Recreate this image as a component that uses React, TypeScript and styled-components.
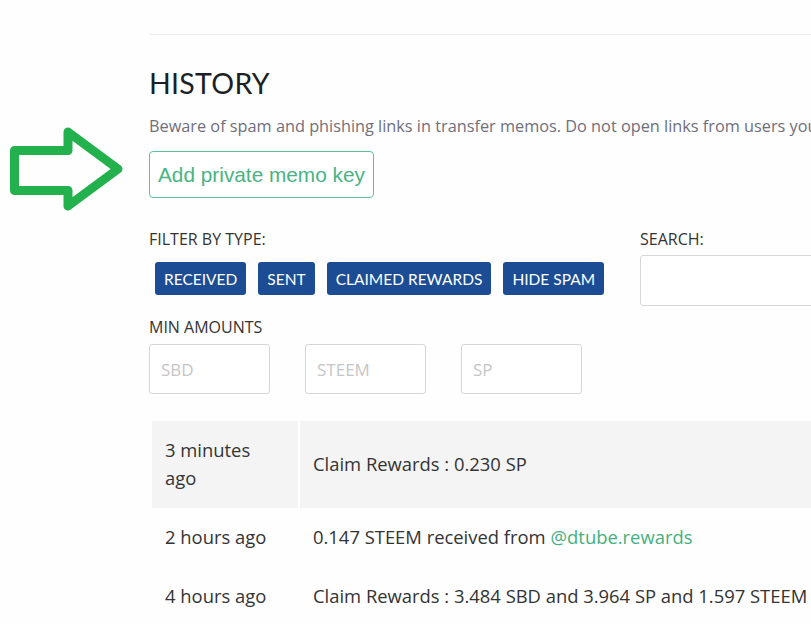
import React from 'react'
import styled, { createGlobalStyle } from 'styled-components'

const GlobalStyle = createGlobalStyle`
  html, body {
    margin: 0;
    padding: 0;
    background: #fefefe;
    overflow: hidden;
  }
  body {
    font-family: 'Open Sans', Lato, sans-serif;
    color: #333;
  }
`

const Page = styled.div`
  position: relative;
  width: 811px;
  height: 624px;
  overflow: hidden;
`

const Content = styled.div`
  width: 760px;
  padding-left: 149px;
  padding-top: 34px;
`

const Rule = styled.hr`
  margin: 0;
  border: 0;
  border-top: 1px solid #ececec;
`

const Title = styled.h2`
  margin: 32px 0 0;
  font-family: Lato, sans-serif;
  font-size: 28.5px;
  font-weight: 400;
  line-height: 32px;
  color: #1b1f26;
  letter-spacing: 0.3px;
`

const Notice = styled.p`
  margin: 18px 0 0;
  font-size: 16.3px;
  line-height: 18px;
  color: #6f6f7a;
  white-space: nowrap;
`

const MemoButton = styled.button`
  margin-top: 16px;
  height: 47px;
  padding: 0 8px;
  border: 1.5px solid #5cc29a;
  border-radius: 4px;
  background: #fff;
  color: #48b383;
  font-family: 'Liberation Sans', Arial, sans-serif;
  font-size: 20.8px;
`

const Filters = styled.div`
  display: grid;
  grid-template-columns: 491px 1fr;
  margin-top: 32px;
`

const Label = styled.div`
  font-size: 16px;
  line-height: 18px;
  color: #333;
  text-transform: uppercase;
`

const ButtonRow = styled.div`
  display: flex;
  gap: 12px;
  margin: 14px 0 0 6px;
`

const TypeButton = styled.button`
  height: 33px;
  padding: 0 9px;
  border: 0;
  border-radius: 3px;
  background: #1b4c94;
  color: #fff;
  font-family: Lato, sans-serif;
  font-size: 15.5px;
  text-transform: uppercase;
  white-space: nowrap;
`

const AmountsLabel = styled(Label)`
  margin-top: 23px;
`

const AmountRow = styled.div`
  display: flex;
  gap: 35px;
  margin-top: 8px;
`

const AmountInput = styled.input`
  box-sizing: border-box;
  width: 121px;
  height: 50px;
  padding: 0 11px;
  border: 1.5px solid #d6d6d6;
  border-radius: 3px;
  font-family: 'Open Sans', sans-serif;
  font-size: 17px;
  &::placeholder {
    color: #c6c6c6;
  }
`

const SearchBox = styled.div`
  padding-left: 0;
`

const SearchInput = styled.input`
  box-sizing: border-box;
  width: 300px;
  height: 51px;
  margin-top: 7px;
  border: 1.5px solid #d6d6d6;
  border-radius: 3px;
`

const Table = styled.div`
  margin: 27px 0 0 3px;
`

const Row = styled.div<{ shaded?: boolean }>`
  display: grid;
  grid-template-columns: 146px 1fr;
  gap: 2px;
  font-size: 18.4px;
  line-height: 28px;
  color: #333;
  & > div {
    background: ${p => (p.shaded ? '#f4f4f4' : 'transparent')};
    padding: 15px 10px 16px 13px;
    display: flex;
    align-items: center;
    white-space: nowrap;
  }
`

const Link = styled.a`
  color: #45b07f;
  text-decoration: none;
  margin-left: 5px;
`

const Arrow = styled.svg`
  position: absolute;
  left: 0;
  top: 120px;
`

const GreenArrow = () => (
  <Arrow width="135" height="100" viewBox="0 0 135 100">
    <path
      d="M14.5 30.5 H68 V12 L118 49 L68 86 V70.5 H14.5 Z"
      fill="none"
      stroke="#22b14c"
      strokeWidth="9"
      strokeLinejoin="round"
    />
  </Arrow>
)

const rows = [
  { when: <>3 minutes<br />ago</>, what: <>Claim Rewards : 0.230 SP</>, shaded: true },
  { when: <>2 hours ago</>, what: <>0.147 STEEM received from<Link href="#">@dtube.rewards</Link></> },
  { when: <>4 hours ago</>, what: <>Claim Rewards : 3.484 SBD and 3.964 SP and 1.597 STEEM</> },
]

export default function App() {
  return (
    <Page>
      <GlobalStyle />
      <GreenArrow />
      <Content>
        <Rule />
        <Title>HISTORY</Title>
        <Notice>
          Beware of spam and phishing links in transfer memos. Do not open links from users you do not trust.
        </Notice>
        <MemoButton>Add private memo key</MemoButton>
        <Filters>
          <div>
            <Label>Filter by type:</Label>
            <ButtonRow>
              {['Received', 'Sent', 'Claimed rewards', 'Hide spam'].map(t => (
                <TypeButton key={t}>{t}</TypeButton>
              ))}
            </ButtonRow>
            <AmountsLabel>Min amounts</AmountsLabel>
            <AmountRow>
              {['SBD', 'STEEM', 'SP'].map(p => (
                <AmountInput key={p} placeholder={p} />
              ))}
            </AmountRow>
          </div>
          <SearchBox>
            <Label>Search:</Label>
            <SearchInput />
          </SearchBox>
        </Filters>
        <Table>
          {rows.map((r, i) => (
            <Row key={i} shaded={r.shaded}>
              <div>{r.when}</div>
              <div>{r.what}</div>
            </Row>
          ))}
        </Table>
      </Content>
    </Page>
  )
}
